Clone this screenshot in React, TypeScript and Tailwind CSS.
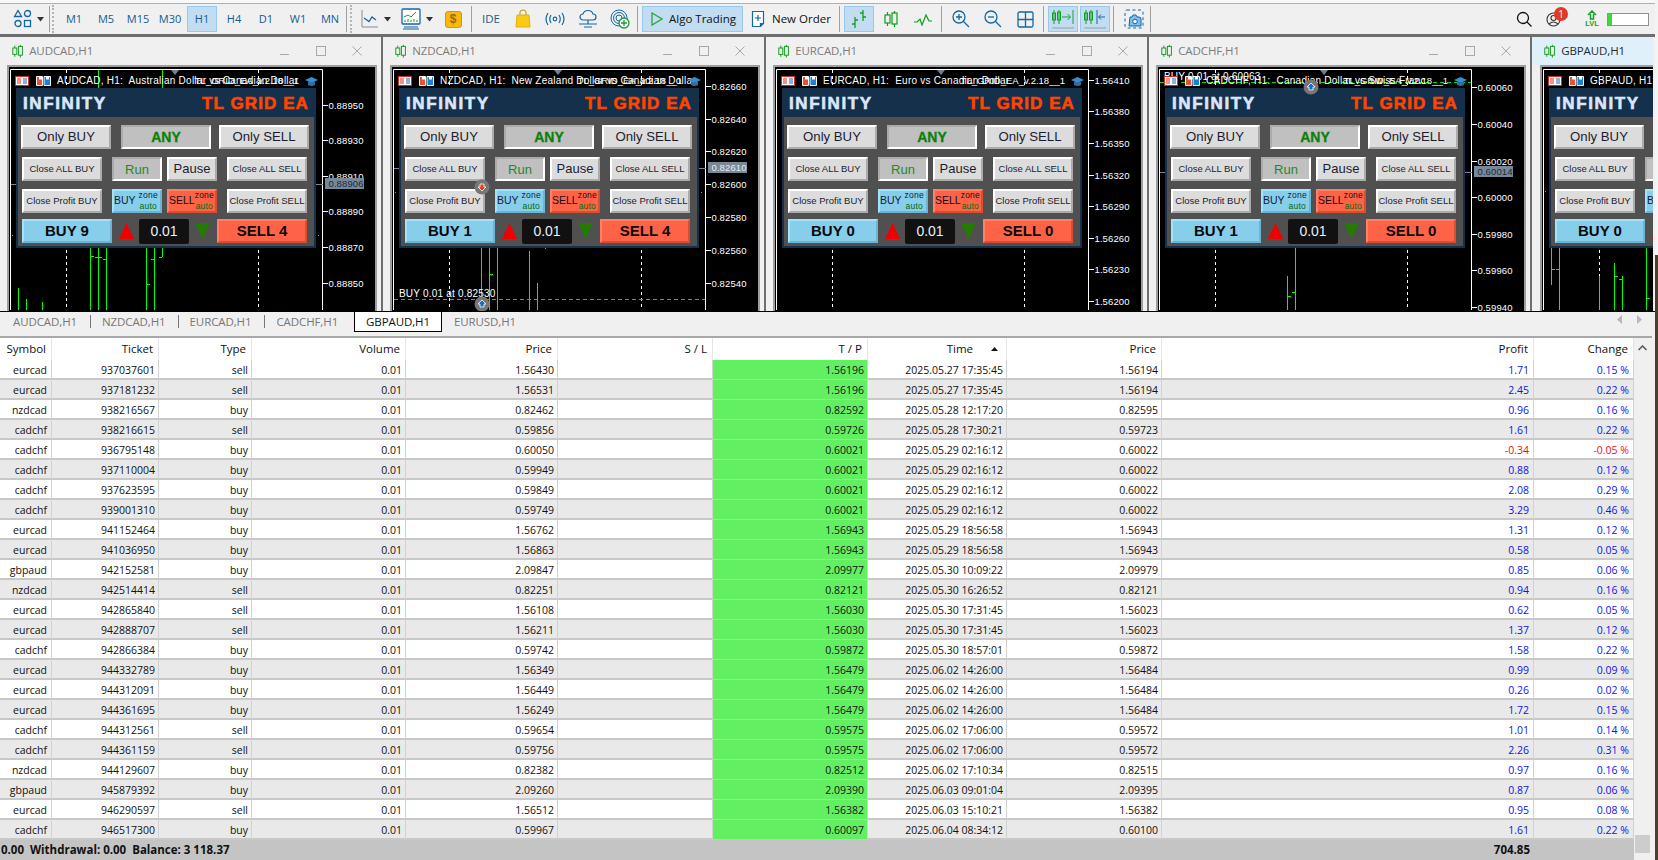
import React from "react";

const UI = "font-['Open_Sans',sans-serif]";

type Row = [string, string, string, string, string, string, string, string, string];
const rows: Row[] = [
  ["eurcad","937037601","sell","1.56430","1.56196","2025.05.27 17:35:45","1.56194","1.71","0.15 %"],
  ["eurcad","937181232","sell","1.56531","1.56196","2025.05.27 17:35:45","1.56194","2.45","0.22 %"],
  ["nzdcad","938216567","buy","0.82462","0.82592","2025.05.28 12:17:20","0.82595","0.96","0.16 %"],
  ["cadchf","938216615","sell","0.59856","0.59726","2025.05.28 17:30:21","0.59723","1.61","0.22 %"],
  ["cadchf","936795148","buy","0.60050","0.60021","2025.05.29 02:16:12","0.60022","-0.34","-0.05 %"],
  ["cadchf","937110004","buy","0.59949","0.60021","2025.05.29 02:16:12","0.60022","0.88","0.12 %"],
  ["cadchf","937623595","buy","0.59849","0.60021","2025.05.29 02:16:12","0.60022","2.08","0.29 %"],
  ["cadchf","939001310","buy","0.59749","0.60021","2025.05.29 02:16:12","0.60022","3.29","0.46 %"],
  ["eurcad","941152464","buy","1.56762","1.56943","2025.05.29 18:56:58","1.56943","1.31","0.12 %"],
  ["eurcad","941036950","buy","1.56863","1.56943","2025.05.29 18:56:58","1.56943","0.58","0.05 %"],
  ["gbpaud","942152581","buy","2.09847","2.09977","2025.05.30 10:09:22","2.09979","0.85","0.06 %"],
  ["nzdcad","942514414","sell","0.82251","0.82121","2025.05.30 16:26:52","0.82121","0.94","0.16 %"],
  ["eurcad","942865840","sell","1.56108","1.56030","2025.05.30 17:31:45","1.56023","0.62","0.05 %"],
  ["eurcad","942888707","sell","1.56211","1.56030","2025.05.30 17:31:45","1.56023","1.37","0.12 %"],
  ["cadchf","942866384","buy","0.59742","0.59872","2025.05.30 18:57:01","0.59872","1.58","0.22 %"],
  ["eurcad","944332789","buy","1.56349","1.56479","2025.06.02 14:26:00","1.56484","0.99","0.09 %"],
  ["eurcad","944312091","buy","1.56449","1.56479","2025.06.02 14:26:00","1.56484","0.26","0.02 %"],
  ["eurcad","944361695","buy","1.56249","1.56479","2025.06.02 14:26:00","1.56484","1.72","0.15 %"],
  ["cadchf","944312561","sell","0.59654","0.59575","2025.06.02 17:06:00","0.59572","1.01","0.14 %"],
  ["cadchf","944361159","sell","0.59756","0.59575","2025.06.02 17:06:00","0.59572","2.26","0.31 %"],
  ["nzdcad","944129607","buy","0.82382","0.82512","2025.06.02 17:10:34","0.82515","0.97","0.16 %"],
  ["gbpaud","945879392","buy","2.09260","2.09390","2025.06.03 09:01:04","2.09395","0.87","0.06 %"],
  ["eurcad","946290597","sell","1.56512","1.56382","2025.06.03 15:10:21","1.56382","0.95","0.08 %"],
  ["cadchf","946517300","buy","0.59967","0.60097","2025.06.04 08:34:12","0.60100","1.61","0.22 %"],
];

const COLS = "grid grid-cols-[52px_107px_93px_154px_152px_155px_155px_139px_155px_372px_100px]";

/* ---------- toolbar icons ---------- */
const B = "#1566a6";
const Sep = ({ m }: { m: string }) => <div className={`w-px h-[26px] bg-[#a0a0a0] shrink-0 ${m}`} />;
const Grip = ({ m }: { m: string }) => (
  <div className={`w-[3px] h-[28px] shrink-0 ${m} border-l-2 border-dotted border-[#b4b4b4]`} />
);
const Caret = ({ m = "" }: { m?: string }) => (
  <div className={`w-[10px] flex justify-center shrink-0 ${m}`}>
    <svg width="8" height="5"><path d="M0 0h7L3.500 4.500z" fill="#333" /></svg>
  </div>
);
const Cell = ({ w, m = "", active = false, children }: { w: string; m?: string; active?: boolean; children: React.ReactNode }) => (
  <div className={`${w} ${m} h-[26px] shrink-0 flex items-center justify-center ${active ? "bg-[#c2dcf2] border border-[#98c8ee]" : ""}`}>
    {children}
  </div>
);

const Shapes = () => (
  <svg width="20" height="20" viewBox="0 0 20 20" fill="none" stroke={B} strokeWidth="1.300">
    <path d="M5 1.500l3.500 6h-7z" /><circle cx="14.500" cy="4.500" r="3" /><circle cx="5" cy="14.500" r="3" /><rect x="11.500" y="11.500" width="6" height="6" />
  </svg>
);
const LineIco = () => (
  <svg width="18" height="20" viewBox="0 0 18 20" fill="none">
    <path d="M1 1v17h16" stroke="#8a8a8a" /><path d="M3 9l5 3.500L11 8l4 3" stroke={B} strokeWidth="1.300" />
  </svg>
);
const Monitor = () => (
  <svg width="20" height="22" viewBox="0 0 20 22" fill="none">
    <rect x="1" y="1" width="18" height="15" rx="1" stroke={B} strokeWidth="1.300" fill="#fff" />
    <path d="M3 9l4-2 3 2 5-5" stroke="#1a9a3a" />
    <path d="M4 14v-2M7 14v-3M10 14v-2M13 14v-3M16 14v-2" stroke="#1a9a3a" />
    <path d="M3 19h14M2 21h16" stroke={B} />
  </svg>
);
const Dollar = () => (
  <div className="w-[17px] h-[17px] rounded-[3px] bg-[#f7b90e] border border-[#cf9a10] flex items-center justify-center text-[12px] leading-none font-bold text-[#9a6a10] font-['Liberation_Sans',sans-serif]">$</div>
);
const Bag = () => (
  <svg width="16" height="20" viewBox="0 0 16 20" fill="none">
    <path d="M5 6V3q0-2 3-2t3 2v3" stroke="#b98a10" /><path d="M2 6h12l1 12H1z" fill="#f9cb12" stroke="#e2ae10" />
  </svg>
);
const Signal = () => (
  <svg width="20" height="16" viewBox="0 0 20 16" fill="none" stroke={B} strokeWidth="1.200">
    <circle cx="10" cy="8" r="1.800" /><path d="M6 4q-2.500 4 0 8M14 4q2.500 4 0 8M3 2q-4 6 0 12M17 2q4 6 0 12" />
  </svg>
);
const Cloud = () => (
  <svg width="20" height="20" viewBox="0 0 20 20" fill="none" stroke={B} strokeWidth="1.200">
    <path d="M5 11a3 3 0 0 1 0-6q1-3.500 5-3.500t5 3.500a3 3 0 0 1 0 6z" /><path d="M10 11v4M1 15h18M6 18h8" />
  </svg>
);
const GlobePlus = () => (
  <svg width="20" height="20" viewBox="0 0 20 20" fill="none">
    <g stroke={B}><circle cx="9" cy="9" r="8" /><circle cx="9" cy="9" r="5.500" /><circle cx="9" cy="9" r="3" /></g>
    <circle cx="14" cy="14" r="5" fill="#fff" stroke="#1a9a3a" strokeWidth="1.300" /><path d="M14 11v6M11 14h6" stroke="#1a9a3a" strokeWidth="1.300" />
  </svg>
);
const Play = () => (
  <svg width="12" height="14" viewBox="0 0 12 14" fill="none"><path d="M1 1l10 6-10 6z" stroke="#27a83a" strokeWidth="1.300" /></svg>
);
const NewOrderIco = () => (
  <svg width="14" height="18" viewBox="0 0 14 18" fill="none" stroke={B} strokeWidth="1.200">
    <path d="M1.500 1.500h11v12l-3 3h-8z" fill="#fff" /><path d="M7 5v6M4 8h6" />
    <path d="M9.500 16.500v-3h3" fill={B} />
  </svg>
);
const G = "#0e9e1e";
const BarsIco = () => (
  <svg width="16" height="20" viewBox="0 0 16 20" fill="none" stroke={G} strokeWidth="1.300">
    <path d="M4 8v11M1 15h3M4 11h3M12 1v11M9 4h3M12 8h3" />
  </svg>
);
const CandlesIco = ({ s = 1 }: { s?: number }) => (
  <svg width={14 * s} height={18 * s} viewBox="0 0 14 18" fill="none" stroke={G} strokeWidth="1.200">
    <path d="M3.500 2v14" /><rect x="1" y="5" width="5" height="8" fill="#f0f0f0" />
    <path d="M10.500 1v16" /><rect x="8" y="3" width="5" height="11" fill="#f0f0f0" />
  </svg>
);
const WaveIco = () => (
  <svg width="18" height="14" viewBox="0 0 18 14" fill="none" stroke={G} strokeWidth="1.200"><path d="M0 10h3l3-3 2 6 4-10 3 6h3" /></svg>
);
const Mag = ({ plus }: { plus: boolean }) => (
  <svg width="18" height="18" viewBox="0 0 18 18" fill="none" stroke={B} strokeWidth="1.300">
    <circle cx="7" cy="7" r="6" /><path d="M11.500 11.500L17 17" /><path d={plus ? "M4 7h6M7 4v6" : "M4 7h6"} />
  </svg>
);
const GridIco = () => (
  <svg width="17" height="17" viewBox="0 0 17 17" fill="none" stroke={B} strokeWidth="1.300">
    <rect x="1" y="1" width="15" height="15" rx="1.500" /><path d="M8.500 1v15M1 8.500h15" />
  </svg>
);
const ShiftIco = ({ back }: { back: boolean }) => (
  <svg width="24" height="22" viewBox="0 0 24 22" fill="none">
    <g stroke={G}><path d="M3 2v14M8 2v14" /><rect x="1.500" y="5" width="3" height="7" /><rect x="6.500" y="4" width="3" height="8" /></g>
    {back
      ? <path d="M14 2v14M22 9h-6M18 6.500L15.500 9l2.500 2.500" stroke="#1566a6" />
      : <path d="M22 2v14M11 9h8M16.500 6L19.500 9l-3 3" stroke="#1aa03a" />}
    <path d="M1 20h22" stroke="#a0a0a0" />
  </svg>
);
const Camera = () => (
  <svg width="20" height="20" viewBox="0 0 20 20" fill="none" stroke={B}>
    <rect x="1" y="1" width="18" height="18" rx="2" strokeDasharray="3 2.500" />
    <path d="M6 8h2l1-2h3l1 2h2q2 0 2 2v7H5z" fill="#7cc0ec" /><circle cx="11" cy="12.500" r="2.300" fill="#f0f0f0" />
  </svg>
);
const SearchIco = () => (
  <svg width="16" height="16" viewBox="0 0 16 16" fill="none" stroke="#111" strokeWidth="1.300"><circle cx="7" cy="7" r="5.500" /><path d="M11 11l4.500 4.500" /></svg>
);

function Toolbar() {
  const tf = ["M1", "M5", "M15", "M30", "H1", "H4", "D1", "W1", "MN"];
  return (
    <div className="h-[37px] shrink-0 flex flex-col bg-[#f0f0f0]">
      <div className="h-[4px] shrink-0 border-b border-[#b0b0b0] bg-[#f8f8f8]" />
      <div className="h-[30px] shrink-0 flex items-center pl-[9px]">
        <Cell w="w-[27px]"><Shapes /></Cell>
        <Caret />
        <Sep m="ml-[3px]" />
        <Grip m="ml-[2px]" />
        <div className="ml-[3px] flex">
          {tf.map((t) => (
            <div key={t} className="w-[32px] flex justify-center">
              <div className={`w-[30px] h-[26px] flex items-center justify-center text-[11px] text-[#165c94] ${t === "H1" ? "bg-[#c2dcf2] border border-[#98c8ee]" : ""}`}>{t}</div>
            </div>
          ))}
        </div>
        <Sep m="" />
        <Grip m="ml-[3px]" />
        <Cell w="w-[26px]" m="ml-[4px]"><LineIco /></Cell>
        <Caret />
        <Cell w="w-[26px]" m="ml-[5px]"><Monitor /></Cell>
        <Caret m="ml-[1px]" />
        <Cell w="w-[24px]" m="ml-[6px]"><Dollar /></Cell>
        <Sep m="ml-[6px]" />
        <Cell w="w-[30px]" m="ml-[4px]"><span className="text-[11.500px] text-[#165c94]">IDE</span></Cell>
        <Cell w="w-[26px]" m="ml-[4px]"><Bag /></Cell>
        <Cell w="w-[28px]" m="ml-[5px]"><Signal /></Cell>
        <Cell w="w-[28px]" m="ml-[5px]"><Cloud /></Cell>
        <Cell w="w-[28px]" m="ml-[4px]"><GlobePlus /></Cell>
        <Sep m="ml-[3px]" />
        <div className="ml-[4px] w-[101px] h-[26px] shrink-0 flex items-center bg-[#c2dcf2] border border-[#98c8ee] pl-[8px] gap-[6px]">
          <Play />
          <span className="text-[11.500px] text-[#111] whitespace-nowrap">Algo Trading</span>
        </div>
        <div className="ml-[8px] w-[84px] shrink-0 flex items-center gap-[7px]">
          <NewOrderIco />
          <span className="text-[11.500px] text-[#111] whitespace-nowrap">New Order</span>
        </div>
        <Sep m="ml-[4px]" />
        <Cell w="w-[30px]" m="ml-[4px]" active><BarsIco /></Cell>
        <Cell w="w-[28px]" m="ml-[3px]"><CandlesIco /></Cell>
        <Cell w="w-[28px]" m="ml-[4px]"><WaveIco /></Cell>
        <Sep m="ml-[4px]" />
        <Cell w="w-[28px]" m="ml-[5px]"><Mag plus /></Cell>
        <Cell w="w-[28px]" m="ml-[4px]"><Mag plus={false} /></Cell>
        <Cell w="w-[28px]" m="ml-[4px]"><GridIco /></Cell>
        <Sep m="ml-[4px]" />
        <Cell w="w-[30px]" m="ml-[4px]" active><ShiftIco back={false} /></Cell>
        <Cell w="w-[30px]" m="ml-[2px]" active><ShiftIco back /></Cell>
        <Sep m="ml-[3px]" />
        <Cell w="w-[28px]" m="ml-[6px]"><Camera /></Cell>
        <Sep m="ml-[2px]" />
        <div className="ml-auto flex items-center pr-[6px]">
          <Cell w="w-[24px]"><SearchIco /></Cell>
          <div className="relative ml-[3px] w-[28px] h-[26px] flex items-center justify-center">
            <svg width="15" height="15" viewBox="0 0 15 15" fill="none" stroke="#333" strokeWidth="1.100"><circle cx="7.500" cy="7.500" r="6.500" /><circle cx="7.500" cy="6" r="2.500" /><path d="M3 12q4.500-4 9 0" /></svg>
            <div className="absolute right-[-1px] top-[1px] w-[14px] h-[14px] rounded-full bg-[#e03a24] text-white text-[10px] leading-[14px] text-center">1</div>
          </div>
          <div className="ml-[13px] w-[24px] flex flex-col items-center text-[#12a02a]">
            <svg width="10" height="10" viewBox="0 0 10 10" fill="none" stroke="#12a02a" strokeWidth="1.500"><path d="M1 5l4-4 4 4M3.500 4v5h3V4" /></svg>
            <span className="text-[7.500px] leading-[8px] font-semibold font-['Liberation_Sans',sans-serif]">LVL</span>
          </div>
          <div className="ml-[3px] w-[42px] h-[13px] bg-white border border-[#909090]">
            <div className="w-[4px] h-full bg-[#3dd93d]" />
          </div>
        </div>
      </div>
      <div className="h-[3px] shrink-0 bg-[#6e6e6e]" />
    </div>
  );
}

/* ---------- expert panel ---------- */
const PANEL = "font-['Liberation_Sans',Arial,sans-serif]";
const raised = "border-2 border-t-white border-l-white border-r-[#ababab] border-b-[#ababab] bg-[#dcdcdc] text-[#1c1c30]";
const sunken = "border-2 border-t-[#ababab] border-l-[#ababab] border-r-white border-b-white bg-[#c0c0c0]";
const blueBtn = "border-2 border-t-[#a3e2fa] border-l-[#a3e2fa] border-r-[#6cb4d4] border-b-[#6cb4d4] bg-[#87ceeb]";
const redBtn = "border-2 border-t-[#ff8066] border-l-[#ff8066] border-r-[#d94e33] border-b-[#d94e33] bg-[#ff6347]";

function Panel({ buy, sell, left }: { buy: string; sell: string; left: string }) {
  const small = "w-[80px] h-[24px] flex items-center justify-center text-[9.500px] whitespace-nowrap shrink-0";
  return (
    <div className={`absolute ${left} top-[21px] w-[300px] h-[160px] bg-[#14304a] ${PANEL}`}>
      <div className="h-[29px] flex items-center justify-between pl-[7px] pr-[7px] pt-[2px]">
        <span className="text-[17px] font-bold tracking-[1.6px] text-[#dbe6f8] [-webkit-text-stroke:0.6px_#dbe6f8]">INFINITY</span>
        <span className="text-[17px] font-bold tracking-[1.1px] text-[#ff4500] [-webkit-text-stroke:0.6px_#ff4500]">TL GRID EA</span>
      </div>
      <div className="mx-[2px] h-[129px] bg-[#505050] flex flex-col pt-[8px]">
        <div className="flex pl-[3px]">
          <div className={`w-[90px] h-[24px] flex items-center justify-center text-[13.200px] ${raised}`}>Only BUY</div>
          <div className={`ml-[10px] w-[90px] h-[24px] flex items-center justify-center pt-[1px] text-[14px] font-bold text-[#0b800b] [-webkit-text-stroke:0.3px_#0b800b] ${sunken}`}>ANY</div>
          <div className={`ml-[8px] w-[90px] h-[24px] flex items-center justify-center text-[13.200px] ${raised}`}>Only SELL</div>
        </div>
        <div className="flex pl-[4px] mt-[8px]">
          <div className={`${small} ${raised}`}>Close ALL BUY</div>
          <div className={`ml-[10px] w-[50px] h-[24px] flex items-center justify-center pt-[1px] text-[13px] text-[#1f8a1f] ${sunken}`}>Run</div>
          <div className={`ml-[5px] w-[50px] h-[24px] flex items-center justify-center text-[13px] ${raised}`}>Pause</div>
          <div className={`ml-[10px] ${small} ${raised}`}>Close ALL SELL</div>
        </div>
        <div className="flex pl-[4px] mt-[8px]">
          <div className={`${small} ${raised}`}>Close Profit BUY</div>
          <div className={`ml-[10px] w-[50px] h-[24px] flex items-center text-[#10223a] ${blueBtn}`}>
            <span className="text-[10.500px]">BUY</span>
            <div className="ml-[3px] flex flex-col items-center text-[8.500px] leading-[11px] tracking-[0.2px]">
              <span>zone</span><span className="text-[#006a00]">auto</span>
            </div>
          </div>
          <div className={`ml-[5px] w-[50px] h-[24px] flex items-center text-[#10101a] ${redBtn}`}>
            <span className="text-[10.500px]">SELL</span>
            <div className="flex flex-col items-center text-[8.500px] leading-[11px] tracking-[0.2px]">
              <span>zone</span><span className="text-[#006a00]">auto</span>
            </div>
          </div>
          <div className={`ml-[10px] ${small} ${raised}`}>Close Profit SELL</div>
        </div>
        <div className="flex pl-[4px] mt-[6px] items-start">
          <div className={`w-[90px] h-[24px] flex items-center justify-center text-[15px] font-bold text-[#0a0a0a] ${blueBtn}`}>{buy}</div>
          <svg className="ml-[7px] mt-[4px] shrink-0" width="15" height="16"><path d="M7.500 0L15 16H0z" fill="#f00000" /></svg>
          <div className="ml-[5px] w-[50px] h-[25px] rounded-[2px] bg-[#111111] text-[#e8f0f8] flex items-center justify-center text-[14px]">0.01</div>
          <svg className="ml-[6px] mt-[4px] shrink-0" width="15" height="16"><path d="M0 0H15L7.500 16z" fill="#267a00" /></svg>
          <div className={`ml-[7px] w-[90px] h-[24px] flex items-center justify-center text-[15px] font-bold text-[#0a0a0a] ${redBtn}`}>{sell}</div>
        </div>
      </div>
    </div>
  );
}

/* ---------- chart ---------- */
type Bar = { x: number; a: number; b: number; l?: number; r?: number };
type ChartDef = {
  title: string;
  name: string;
  ea: string;
  labels: [string, number][];
  tag?: [string, number, string];
  bars: Bar[];
  order?: { text: string; tx: number; ty: number; y: number };
  marks?: { x: number; y: number; up: boolean }[];
  buy: string;
  sell: string;
};

const ArrowMark = ({ x, y, up }: { x: number; y: number; up: boolean }) => (
  <g>
    <circle cx={x} cy={y} r="7.500" fill="#777" />
    {up
      ? <path d={`M${x - 4} ${y}l4-4 4 4h-2v3h-4v-3z`} fill="#1a6cc0" stroke="#fff" strokeWidth="0.800" />
      : <path d={`M${x - 4} ${y}l4 4 4-4h-2v-3h-4v3z`} fill="#e8401c" stroke="#fff" strokeWidth="0.800" />}
  </g>
);

function ChartSvg({ c }: { c: ChartDef }) {
  return (
    <svg width="366" height="244" viewBox="9 67 366 244" className={`block ${PANEL}`}>
      <path d="M10.500 310V69.500H322.500V310" fill="none" stroke="#fff" />
      {[66.500, 258.500].map((x) => (
        <path key={x} d={`M${x} 70V310`} stroke="#fff" strokeDasharray="3 3" />
      ))}
      {c.tag && <path d={`M11 ${c.tag[1] + 0.5}H323`} stroke="#778899" />}
      {c.bars.map((b, i) => (
        <g key={i} stroke="#00ff00">
          <path d={`M${b.x + 0.5} ${b.a}V${b.b}`} />
          {b.l !== undefined && <path d={`M${b.x - 3} ${b.l + 0.5}H${b.x}`} />}
          {b.r !== undefined && <path d={`M${b.x + 1} ${b.r + 0.5}H${b.x + 4}`} />}
        </g>
      ))}
      {c.order && (
        <>
          <path d={`M11 ${c.order.y + 0.5}H322`} stroke="#00e000" strokeDasharray="4 3" />
          <text x={c.order.tx} y={c.order.ty} fill="#fff" fontSize="10" letterSpacing="0.2">{c.order.text}</text>
        </>
      )}
      {c.labels.map(([t, y]) => (
        <g key={t}>
          <path d={`M323 ${y + 0.5}h5`} stroke="#fff" />
          <text x="328.500" y={y + 3.5} fill="#fff" fontSize="9.500" letterSpacing="0.1">{t}</text>
        </g>
      ))}
      {c.tag && (
        <>
          <rect x="325" y={c.tag[1] - 6} width="39" height="11" fill="#778899" />
          <text x="328.500" y={c.tag[1] + 3} fill={c.tag[2]} fontSize="9.500" letterSpacing="0.1">{c.tag[0]}</text>
        </>
      )}
      <path d="M171 70h8l-4 5z" fill="#708090" />
      <g>
        <rect x="15.500" y="76.500" width="13" height="9" fill="#fff" stroke="#e02818" />
        <path d="M17 79h4M17 81h4M17 83h4" stroke="#e02818" />
        <path d="M23 79h4M23 81h4M23 83h4" stroke="#1a60c0" />
        <path d="M36.500 76.500h6v9h-6z" fill="#e85038" stroke="#fff" />
        <path d="M44 76.500h6.500v9H44z" fill="#1a80d8" stroke="#fff" />
        <rect x="39" y="76.500" width="3" height="3" fill="#fff" />
        <rect x="46" y="76.500" width="3" height="3" fill="#fff" />
      </g>
      <text x="57" y="84" fill="#fff" fontSize="10" letterSpacing="0.25" className="whitespace-pre">{c.title}</text>
      <text x="299" y="84" fill="#fff" fontSize="9.500" textAnchor="end">{c.ea}</text>
      <path d="M305 80l6.500-3 6.500 3-6.500 3z" fill="#3a8ccc" />
      <path d="M308 82v3q3.500 2 7 0v-3" fill="#2c6ea8" />
    </svg>
  );
}

const charts: ChartDef[] = [
  {
    name: "AUDCAD,H1",
    title: "AUDCAD, H1:  Australian Dollar vs Canadian Dollar",
    ea: "TL_GRID_EA_v.2.18__1",
    labels: [["0.88950", 105], ["0.88930", 140], ["0.88910", 176], ["0.88890", 211], ["0.88870", 247], ["0.88850", 283]],
    tag: ["0.88906", 184, "#1c2a3a"],
    bars: [
      { x: 90, a: 240, b: 310, r: 256 }, { x: 98, a: 240, b: 310, l: 257, r: 257 }, { x: 106, a: 240, b: 310, l: 259 },
      { x: 146, a: 240, b: 310, r: 284 }, { x: 154, a: 240, b: 310, l: 259 }, { x: 162, a: 240, b: 257, l: 257 },
      { x: 18, a: 288, b: 310 }, { x: 26, a: 299, b: 310 }, { x: 42, a: 302, b: 310 },
      { x: 98, a: 70, b: 88 }, { x: 162, a: 70, b: 88 }, { x: 318, a: 235, b: 236 }, { x: 12, a: 235, b: 236 },
    ],
    buy: "BUY 9",
    sell: "SELL 4",
  },
  {
    name: "NZDCAD,H1",
    title: "NZDCAD, H1:  New Zealand Dollar vs Canadian Dollar",
    ea: "TL_GRID_EA_v.2.18__1",
    labels: [["0.82660", 86], ["0.82640", 119], ["0.82620", 151], ["0.82600", 184], ["0.82580", 217], ["0.82560", 250], ["0.82540", 283]],
    tag: ["0.82610", 168, "#e8eef4"],
    bars: [
      { x: 98, a: 240, b: 310 }, { x: 106, a: 240, b: 310, r: 274 }, { x: 114, a: 240, b: 310 },
      { x: 146, a: 251, b: 310 }, { x: 154, a: 283, b: 310 }, { x: 162, a: 248, b: 249 },
      { x: 12, a: 192, b: 193 }, { x: 318, a: 192, b: 193 },
    ],
    order: { text: "BUY 0.01 at 0.82530", tx: 16, ty: 297, y: 299 },
    marks: [{ x: 99, y: 187, up: false }, { x: 99, y: 304, up: true }],
    buy: "BUY 1",
    sell: "SELL 4",
  },
  {
    name: "EURCAD,H1",
    title: "EURCAD, H1:  Euro vs Canadian Dollar",
    ea: "TL_GRID_EA_v.2.18__1",
    labels: [["1.56410", 80], ["1.56380", 111], ["1.56350", 143], ["1.56320", 175], ["1.56290", 206], ["1.56260", 238], ["1.56230", 269], ["1.56200", 301]],
    bars: [],
    buy: "BUY 0",
    sell: "SELL 0",
  },
  {
    name: "CADCHF,H1",
    title: "CADCHF, H1:  Canadian Dollar vs Swiss Franc",
    ea: "TL_GRID_EA_v.2.18__1",
    labels: [["0.60060", 87], ["0.60040", 124], ["0.60020", 161], ["0.60000", 197], ["0.59980", 234], ["0.59960", 270], ["0.59940", 307]],
    tag: ["0.60014", 172, "#1c2a3a"],
    bars: [{ x: 146, a: 240, b: 310, l: 292 }, { x: 138, a: 276, b: 310, r: 296 }],
    order: { text: "BUY 0.01 at 0.60063", tx: 15, ty: 80, y: 82 },
    marks: [{ x: 162, y: 87, up: true }],
    buy: "BUY 1",
    sell: "SELL 0",
  },
  {
    name: "GBPAUD,H1",
    title: "GBPAUD, H1:",
    ea: "",
    labels: [],
    bars: [
      { x: 18, a: 240, b: 285, r: 269 }, { x: 26, a: 240, b: 310, l: 269 }, { x: 66, a: 276, b: 310 },
      { x: 81, a: 263, b: 310, r: 276 }, { x: 89, a: 276, b: 310, l: 279 }, { x: 113, a: 240, b: 310, r: 298 },
      { x: 12, a: 191, b: 192 },
    ],
    buy: "BUY 0",
    sell: "SELL 0",
  },
];

const WinControls = () => (
  <div className="ml-auto flex items-center pr-[19px]">
    <svg width="10" height="10" viewBox="0 0 10 10" className="mr-[26px]"><path d="M0 8.500h9" stroke="#a8a8a8" /></svg>
    <svg width="10" height="10" viewBox="0 0 10 10" className="mr-[26px]"><rect x="0.500" y="0.500" width="9" height="9" fill="none" stroke="#a8a8a8" /></svg>
    <svg width="10" height="10" viewBox="0 0 10 10"><path d="M0.500 0.500l9 9M9.500 0.500l-9 9" stroke="#a8a8a8" /></svg>
  </div>
);

function ChartWindow({ c, last }: { c: ChartDef; last?: boolean }) {
  return (
    <div className={`shrink-0 h-full flex flex-col ${last ? "w-[121px] overflow-hidden pl-[1px] bg-[#f0f0f0]" : "w-[383px] border-r-2 border-[#6e6e6e] bg-[#f0f0f0]"}`}>
      <div className={`h-[28px] shrink-0 flex items-center pl-[12px] ${last ? "bg-[#e0f0fb] -ml-[1px]" : ""}`}>
        <CandlesIco s={0.8} />
        <span className={`ml-[6px] text-[11.500px] tracking-[-0.1px] ${last ? "text-[#2a2a2a]" : "text-[#7c7c7c]"}`}>{c.name}</span>
        {!last && <WinControls />}
      </div>
      <div className="ml-[7px] w-[370px] flex-1 min-h-0 relative border-2 border-b-0 border-[#9e9e9e] bg-black overflow-hidden">
        <ChartSvg c={c} />
        <Panel buy={c.buy} sell={c.sell} left="left-[7px]" />
        {c.marks && (
          <svg width="366" height="244" viewBox="9 67 366 244" className="absolute left-0 top-0 block">
            {c.marks.map((m, i) => <ArrowMark key={i} {...m} />)}
          </svg>
        )}
      </div>
    </div>
  );
}

function Tabs() {
  const base = "text-[11.500px] text-[#777] tracking-[-0.1px]";
  return (
    <div className="h-[25px] shrink-0 flex items-start bg-[#f0f0f0] border-t border-black relative">
      <div className="h-[19px] flex items-center pl-[13px]">
        <span className={base}>AUDCAD,H1</span>
        <div className="ml-[13px] w-px h-[13px] bg-[#777]" />
        <span className={`${base} ml-[11px]`}>NZDCAD,H1</span>
        <div className="ml-[12px] w-px h-[13px] bg-[#777]" />
        <span className={`${base} ml-[11px]`}>EURCAD,H1</span>
        <div className="ml-[13px] w-px h-[13px] bg-[#777]" />
        <span className={`${base} ml-[11px]`}>CADCHF,H1</span>
      </div>
      <div className="absolute left-[354px] top-0 w-[88px] h-[20px] bg-white border-x border-b border-black flex items-center justify-center text-[11.500px] text-[#111] tracking-[-0.1px]">GBPAUD,H1</div>
      <span className={`${base} absolute left-[454px] top-[1px] leading-[18px]`}>EURUSD,H1</span>
      <div className="ml-auto mr-[12px] mt-[3px] flex gap-[14px]">
        <svg width="6" height="10"><path d="M5 0v9L0 4.500z" fill="#b8b8b8" /></svg>
        <svg width="6" height="10"><path d="M0 0v9l5-4.500z" fill="#b8b8b8" /></svg>
      </div>
    </div>
  );
}

function Table() {
  const heads = ["Symbol", "Ticket", "Type", "Volume", "Price", "S / L", "T / P", "Time", "Price", "Profit", "Change"];
  const sep = "border-r border-[#e6e6e6]";
  return (
    <div className="flex-1 flex min-h-0">
      <div className="w-[1634px] shrink-0 flex flex-col bg-white">
        <div className={`${COLS} h-[24px] shrink-0 border-t-2 border-[#a8a8a8] text-[11.500px] text-[#111]`}>
          {heads.map((h, i) => (
            <div key={i} className={`flex items-center justify-end pr-[5px] ${sep}`}>
              {h === "Time" ? (
                <>
                  <span>Time</span>
                  <svg className="ml-[18px] mr-[3px]" width="7" height="4"><path d="M0 4L3.500 0 7 4z" fill="#111" /></svg>
                </>
              ) : h}
            </div>
          ))}
        </div>
        {rows.map((r, i) => {
          const neg = r[7].startsWith("-");
          const color = neg ? "text-[#f01010]" : "text-[#1212e6]";
          const rowBg = i % 2 ? "bg-[#e9e9e9]" : "bg-white";
          const cell = "flex items-center justify-end pt-[3px] border-r border-[#d2d2d2]";
          return (
            <div key={r[1]} className={`${COLS} h-[20px] shrink-0 border-b-2 border-[#c8c8c8] text-[10.500px] text-[#111] ${rowBg}`}>
              <div className={`${cell} pr-[4px]`}>{r[0]}</div>
              <div className={`${cell} pr-[3px]`}>{r[1]}</div>
              <div className={`${cell} pr-[3px]`}>{r[2]}</div>
              <div className={`${cell} pr-[3px]`}>0.01</div>
              <div className={`${cell} pr-[3px]`}>{r[3]}</div>
              <div className={cell} />
              <div className={`${cell} pr-[3px] bg-[#62f062]`}>{r[4]}</div>
              <div className={`${cell} pr-[3px]`}>{r[5]}</div>
              <div className={`${cell} pr-[3px]`}>{r[6]}</div>
              <div className={`${cell} pr-[4px] ${color}`}>{r[7]}</div>
              <div className={`${cell} pr-[4px] ${color}`}>{r[8]}</div>
            </div>
          );
        })}
        <div className="h-[20px] shrink-0 bg-[#c4c4c4] flex items-center text-[11.500px] font-bold text-[#111] whitespace-pre">
          <span className="ml-[1px]">0.00  Withdrawal: 0.00  Balance: 3 118.37</span>
          <span className="ml-auto mr-[104px]">704.85</span>
        </div>
      </div>
      <div className="w-[18px] shrink-0 flex flex-col items-center bg-[#f0f0f0] border-t-2 border-[#a8a8a8] pt-[7px] pb-[7px] pr-[2px]">
        <svg width="9" height="6" viewBox="0 0 9 6" fill="none"><path d="M0.500 5l4-4 4 4" stroke="#555" strokeWidth="1.500" /></svg>
        <div className="mt-auto w-[15px] h-[18px] bg-[#cdcdcd]" />
      </div>
    </div>
  );
}

export default function App() {
  return (
    <div className={`w-[1658px] h-[860px] overflow-hidden flex ${UI}`}>
      <div className="w-[1655px] shrink-0 flex flex-col bg-[#f0f0f0]">
        <Toolbar />
        <div className="h-[274px] shrink-0 flex overflow-hidden">
          {charts.map((c, i) => <ChartWindow key={c.name} c={c} last={i === 4} />)}
        </div>
        <Tabs />
        <Table />
      </div>
      <div className="w-[3px] shrink-0 flex flex-col">
        <div className="h-[255px] bg-[#f4f4f4]" />
        <div className="flex-1 bg-[#4e3f2a]" />
      </div>
    </div>
  );
}
